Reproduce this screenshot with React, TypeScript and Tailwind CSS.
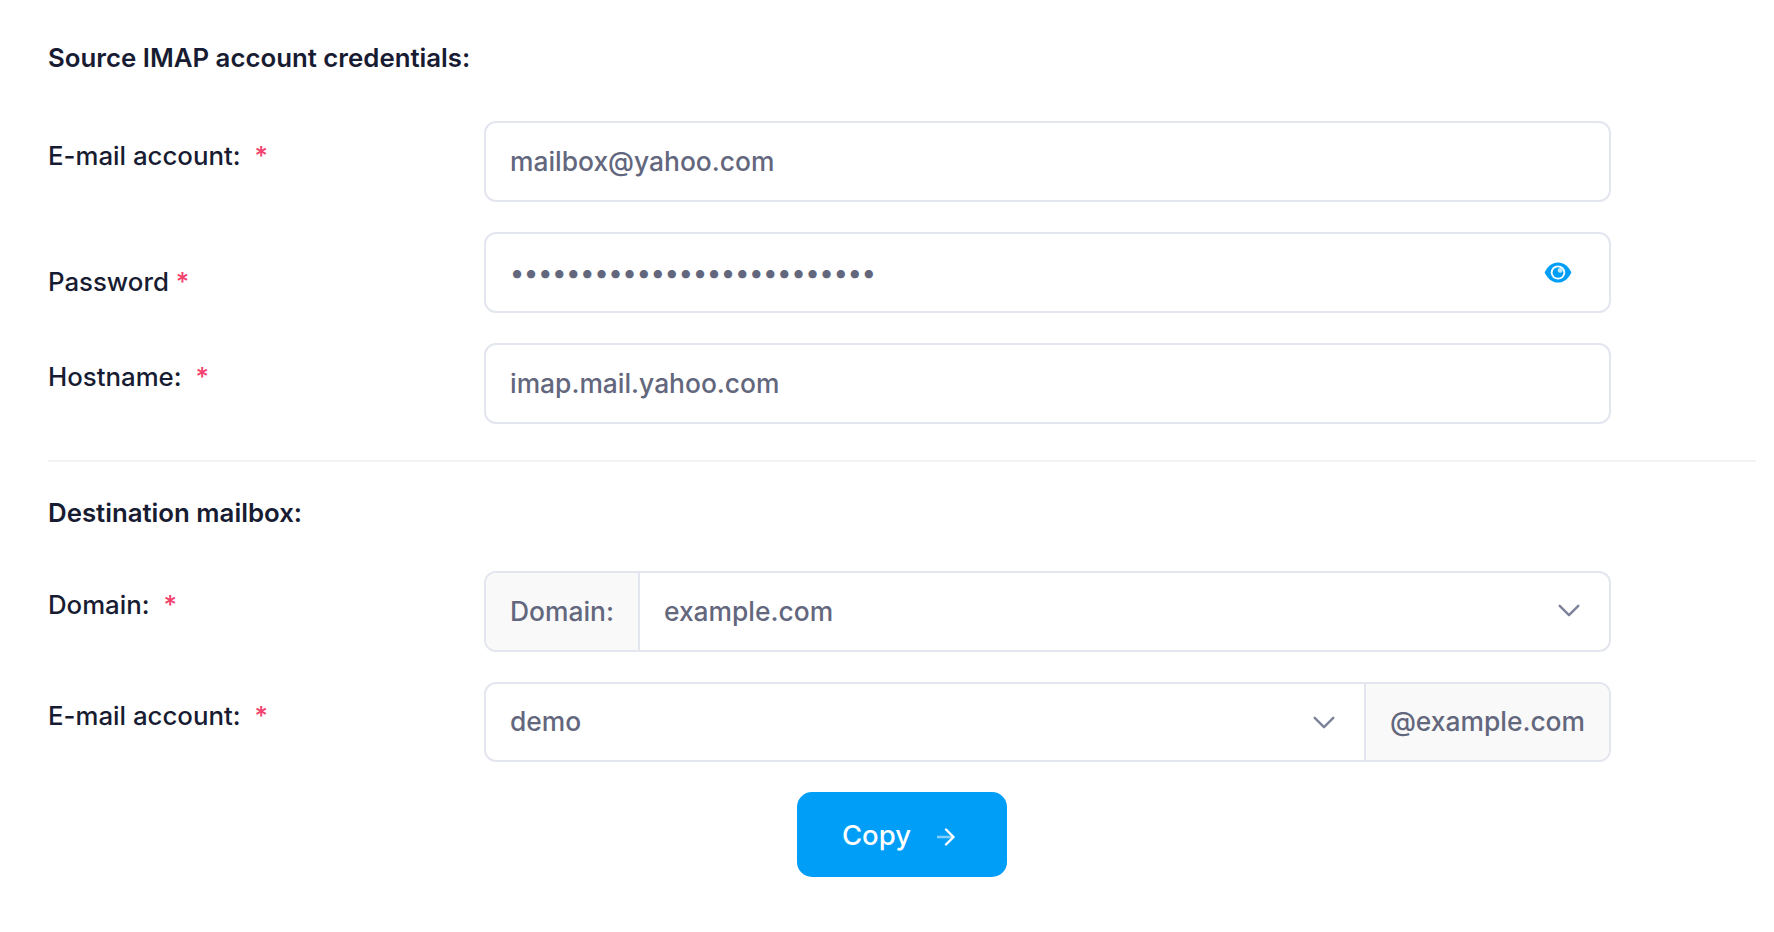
import type { ReactNode } from "react";

function Chevron({ className }: { className?: string }) {
  return (
    <svg viewBox="0 0 24 14" fill="none" className={className}>
      <path d="M2 2l10 10L22 2" stroke="#7e8299" strokeWidth="2.6" strokeLinecap="round" strokeLinejoin="round" />
    </svg>
  );
}

function Eye() {
  return (
    <svg viewBox="0 0 27 21" className="h-[21px] w-[28px]" preserveAspectRatio="none">
      <path d="M0.6 10.5C3.5 4 8 0.4 13.5 0.4S23.5 4 26.4 10.5C23.5 17 19 20.6 13.5 20.6S3.5 17 0.6 10.5Z" fill="#009ef7" />
      <circle cx="13.5" cy="10.5" r="7" fill="#fff" />
      <circle cx="13.5" cy="10.5" r="5.2" fill="#009ef7" />
      <circle cx="15.6" cy="8.4" r="2.4" fill="#fff" opacity="0.75" />
    </svg>
  );
}

function ArrowRight() {
  return (
    <svg viewBox="0 0 18 18" fill="none" className="mt-[2px] h-[18px] w-[18px]">
      <path d="M0.5 9H16" stroke="#fff" strokeOpacity="0.5" strokeWidth="2.4" strokeLinecap="round" />
      <path d="M9 1.5L16.5 9L9 16.5" stroke="#fff" strokeWidth="2.4" strokeLinecap="round" strokeLinejoin="round" />
    </svg>
  );
}

function Field({ label, gap, offset, children }: { label: string; gap: string; offset: string; children: ReactNode }) {
  return (
    <div className="flex">
      <label className={`flex w-[436px] shrink-0 text-[25.8px] font-medium leading-[36px] text-[#181c32] ${offset}`}>
        <span>{label}</span>
        <span className={`text-[#f1416c] ${gap}`}>*</span>
      </label>
      {children}
    </div>
  );
}

const boxClass = "flex w-[1127px] items-center overflow-hidden rounded-[12px] border-2 border-[#e4e6ef] bg-white text-[26.4px] font-medium text-[#63677d]";
const addonClass = "flex h-full items-center bg-[#f9f9f9] px-[24px]";

export default function App() {
  return (
    <div className="min-h-[932px] bg-white pl-[48px] pr-[18px] pt-[40px] font-['Inter',sans-serif]">
      <h3 className="mb-[45px] text-[25.8px] font-semibold leading-[36px] text-[#181c32]">Source IMAP account credentials:</h3>

      <div className="flex flex-col gap-[30px] pr-[144px]">
        <Field label="E-mail account:" gap="ml-[14px]" offset="pt-[17px]">
          <div className={`${boxClass} h-[81px]`}>
            <input readOnly value="mailbox@yahoo.com" className="w-full bg-transparent px-[24px] outline-none" />
          </div>
        </Field>
        <Field label="Password" gap="ml-[7px]" offset="pt-[32px]">
          <div className={`${boxClass} h-[81px]`}>
            <input
              readOnly
              type="password"
              value="abcdefghijklmnopqrstuvwxyz"
              className="w-full bg-transparent pl-[24px] outline-none"
            />
            <span className="mr-[37px] shrink-0">
              <Eye />
            </span>
          </div>
        </Field>
        <Field label="Hostname:" gap="ml-[14px]" offset="pt-[16px]">
          <div className={`${boxClass} h-[81px]`}>
            <input readOnly value="imap.mail.yahoo.com" className="w-full bg-transparent px-[24px] outline-none" />
          </div>
        </Field>
      </div>

      <div className="mb-[33px] mt-[36px] h-[2px] bg-[#f3f3f3]" />

      <h3 className="mb-[40px] text-[25.8px] font-semibold leading-[36px] text-[#181c32]">Destination mailbox:</h3>

      <div className="flex flex-col gap-[30px] pr-[144px]">
        <Field label="Domain:" gap="ml-[14px]" offset="pt-[16px]">
          <div className={`${boxClass} h-[81px]`}>
            <span className={`${addonClass} border-r-2 border-[#e4e6ef]`}>Domain:</span>
            <span className="flex-1 px-[24px]">example.com</span>
            <Chevron className="mb-[3px] mr-[28px] h-[13px] w-[24px]" />
          </div>
        </Field>
        <Field label="E-mail account:" gap="ml-[14px]" offset="pt-[16px]">
          <div className={`${boxClass} h-[80px]`}>
            <span className="flex-1 px-[24px]">demo</span>
            <Chevron className="mr-[28px] h-[13px] w-[24px]" />
            <span className={`${addonClass} border-l-2 border-[#e4e6ef]`}>@example.com</span>
          </div>
        </Field>
      </div>

      <div className="mt-[30px] flex w-[1568px] pl-[749px]">
        <button className="flex h-[85px] w-[210px] items-center justify-center gap-[26px] rounded-[15px] bg-[#009ef7] pr-[7px] pt-[2px] text-[27.5px] font-medium text-white">
          Copy
          <ArrowRight />
        </button>
      </div>
    </div>
  );
}
